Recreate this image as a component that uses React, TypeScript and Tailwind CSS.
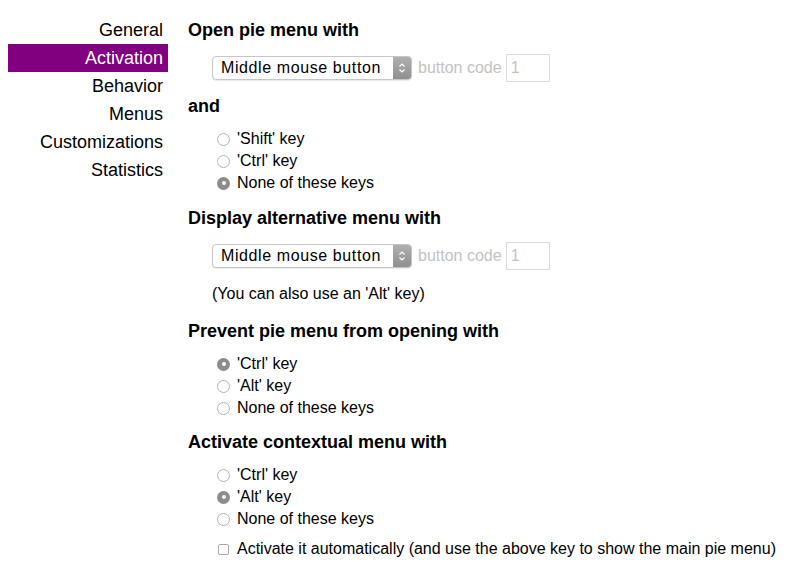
// Pie menu settings — Activation page

const navItems = ['General', 'Activation', 'Behavior', 'Menus', 'Customizations', 'Statistics'];

export default function App() {
  return (
    <div className="flex min-h-[568px] w-[787px] bg-white text-[16px] text-black [font-family:'Liberation_Sans',Arial,sans-serif]">
      {/* Sidebar */}
      <nav className="ml-2 w-[160px] shrink-0 pt-[16px] text-[18px]">
        {navItems.map((item) => (
          <div
            key={item}
            className={`h-[28px] pr-[5px] text-right leading-[28px] ${
              item === 'Activation' ? 'bg-[#800080] text-white' : 'text-black'
            }`}
          >
            {item}
          </div>
        ))}
      </nav>

      {/* Main */}
      <main className="ml-5 flex flex-col pt-[19px]">
        <Heading>Open pie menu with</Heading>
        <ButtonSelect className="mt-[13px]" />

        <Heading className="mt-[13px]">and</Heading>
        <RadioGroup className="mt-[11px]" options={["'Shift' key", "'Ctrl' key", 'None of these keys']} selected={2} />

        <Heading className="mt-[13px]">Display alternative menu with</Heading>
        <ButtonSelect className="mt-[13px]" />
        <p className="mt-[13px] ml-6 leading-[22px]">(You can also use an 'Alt' key)</p>

        <Heading className="mt-[15px]">Prevent pie menu from opening with</Heading>
        <RadioGroup className="mt-[11px]" options={["'Ctrl' key", "'Alt' key", 'None of these keys']} selected={0} />

        <Heading className="mt-[12px]">Activate contextual menu with</Heading>
        <RadioGroup className="mt-[11px]" options={["'Ctrl' key", "'Alt' key", 'None of these keys']} selected={1} />

        <div className="mt-[8px] ml-6 flex h-[22px] items-center">
          <span className="ml-[6px] h-[11px] w-[11px] rounded-[2px] border border-[#a9a9a9] bg-white" />
          <span className="ml-[8px] leading-[22px]">
            Activate it automatically (and use the above key to show the main pie menu)
          </span>
        </div>
      </main>
    </div>
  );
}

function Heading({ children, className = '' }: { children: React.ReactNode; className?: string }) {
  return <h2 className={`text-[18px] font-bold leading-[22px] ${className}`}>{children}</h2>;
}

function ButtonSelect({ className = '' }: { className?: string }) {
  return (
    <div className={`ml-6 flex h-[28px] items-center ${className}`}>
      <div className="flex h-[24px] w-[200px] items-stretch overflow-hidden rounded-[4px] border border-[#c6c6c6] bg-white shadow-[0_1px_1px_rgba(0,0,0,0.08)]">
        <span className="flex-1 pl-[8px] leading-[22px] tracking-[0.6px]">Middle mouse button</span>
        <span className="flex w-[18px] items-center justify-center bg-gradient-to-b from-[#b0b0b0] to-[#8f8f8f]">
          <ChevronsIcon />
        </span>
      </div>
      <span className="ml-[6px] text-[#c3c3c3]">button code</span>
      <div className="ml-[4px] h-[28px] w-[44px] border border-[#dcdcdc] pl-[4px] leading-[26px] text-[#c3c3c3]">1</div>
    </div>
  );
}

function RadioGroup({
  options,
  selected,
  className = '',
}: {
  options: string[];
  selected: number;
  className?: string;
}) {
  return (
    <div className={`ml-6 flex flex-col ${className}`}>
      {options.map((opt, i) => (
        <div key={opt} className="flex h-[22px] items-center">
          {i === selected ? (
            <span className="ml-[5px] flex h-[13px] w-[13px] items-center justify-center rounded-full bg-[#8c8c8c]">
              <span className="h-[4px] w-[4px] rounded-full bg-white" />
            </span>
          ) : (
            <span className="ml-[5px] h-[13px] w-[13px] rounded-full border border-[#b4b4b4] bg-white" />
          )}
          <span className="ml-[7px] leading-[22px]">{opt}</span>
        </div>
      ))}
    </div>
  );
}

function ChevronsIcon() {
  return (
    <svg width="8" height="12" viewBox="0 0 8 12" fill="none" stroke="white" strokeWidth="1.2">
      <path d="M1.5 4.5 4 2l2.5 2.5" />
      <path d="M1.5 7.5 4 10l2.5-2.5" />
    </svg>
  );
}
